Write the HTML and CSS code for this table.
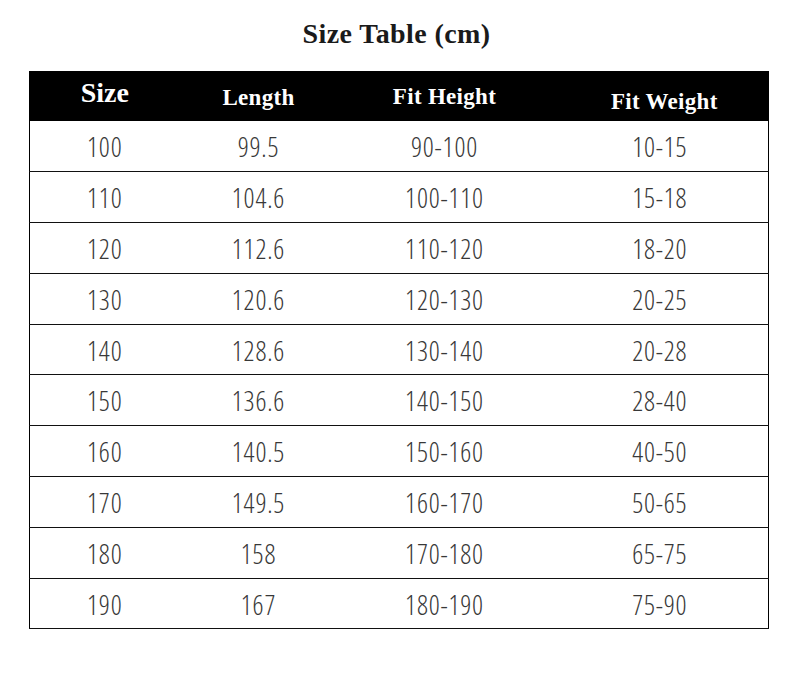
FILE: index.html
```html
<!DOCTYPE html>
<html>
<head>
<meta charset="utf-8">
<link rel="stylesheet" href="styles.css">
</head>
<body>
<div class="page">
  <h1 class="title">Size Table (cm)</h1>
  <table class="size-table">
    <colgroup>
      <col class="c1"><col class="c2"><col class="c3"><col class="c4">
    </colgroup>
    <thead>
      <tr class="head-row">
        <th class="h-size">Size</th>
        <th class="h-len">Length</th>
        <th class="h-height">Fit Height</th>
        <th class="h-weight">Fit Weight</th>
      </tr>
    </thead>
    <tbody>
      <tr><td>100</td><td>99.5</td><td>90-100</td><td>10-15</td></tr>
      <tr><td>110</td><td>104.6</td><td>100-110</td><td>15-18</td></tr>
      <tr><td>120</td><td>112.6</td><td>110-120</td><td>18-20</td></tr>
      <tr><td>130</td><td>120.6</td><td>120-130</td><td>20-25</td></tr>
      <tr><td>140</td><td>128.6</td><td>130-140</td><td>20-28</td></tr>
      <tr><td>150</td><td>136.6</td><td>140-150</td><td>28-40</td></tr>
      <tr><td>160</td><td>140.5</td><td>150-160</td><td>40-50</td></tr>
      <tr><td>170</td><td>149.5</td><td>160-170</td><td>50-65</td></tr>
      <tr><td>180</td><td>158</td><td>170-180</td><td>65-75</td></tr>
      <tr><td>190</td><td>167</td><td>180-190</td><td>75-90</td></tr>
    </tbody>
  </table>
</div>
</body>
</html>
```

FILE: styles.css
```css
html, body {
  margin: 0;
  padding: 0;
  background: #ffffff;
}

.page {
  width: 793px;
  height: 674px;
  display: flex;
  flex-direction: column;
  align-items: flex-start;
}

.title {
  align-self: stretch;
  margin: 0;
  height: 71px;
  box-sizing: border-box;
  padding-top: 18px;
  padding-left: 0;
  text-align: center;
  font-family: "Liberation Serif", "Times New Roman", serif;
  font-weight: bold;
  font-size: 28px;
  line-height: 32px;
  letter-spacing: 0.4px;
  color: #1a1a1a;
}

.size-table {
  margin-left: 29px;
  width: 740px;
  table-layout: fixed;
  border-collapse: collapse;
  border-left: 1px solid #000;
  border-right: 1px solid #000;
}

.c1 { width: 150px; }
.c2 { width: 158px; }
.c3 { width: 214px; }
.c4 { width: 217px; }

.head-row {
  height: 50px;
}

.size-table th {
  background: #000;
  color: #fff;
  padding: 0;
  font-family: "Liberation Serif", "Times New Roman", serif;
  font-weight: bold;
  font-size: 23px;
  letter-spacing: 0.3px;
  text-align: center;
  vertical-align: top;
  line-height: 23px;
}

.size-table th.h-size {
  font-size: 28px;
  line-height: 28px;
  padding-top: 8px;
  letter-spacing: 0;
}

.size-table th.h-len { padding-top: 15px; }
.size-table th.h-height { padding-top: 14px; }
.size-table th.h-weight { padding-top: 19px; padding-left: 9px; }

.size-table tbody tr {
  height: 50.8px;
}

.size-table td {
  padding: 1px 0 0 0;
  border-bottom: 1px solid #111;
  text-align: center;
  vertical-align: middle;
  font-family: "Open Sans", "Liberation Sans", sans-serif;
  font-weight: 300;
  font-size: 27px;
  font-stretch: 75%;
  letter-spacing: 0.8px;
  line-height: 27px;
  color: #383838;
}
```
